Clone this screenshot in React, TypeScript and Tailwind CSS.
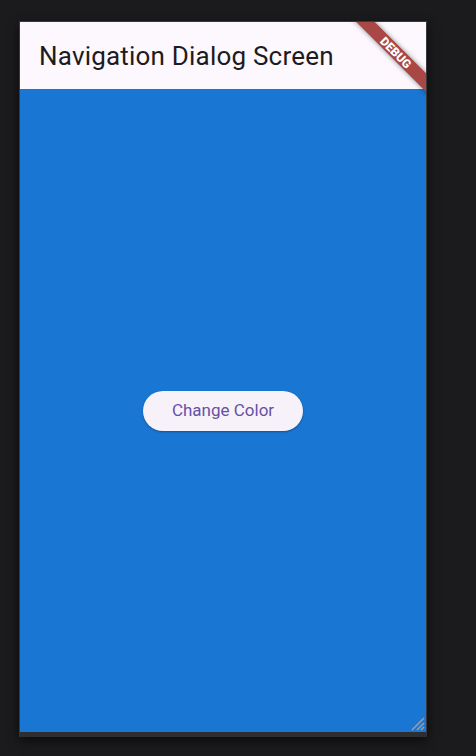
export default function App() {
	return (
		<div className="min-h-screen bg-[#1b1b1d] pl-[19px] pt-[21px]" style={{ fontFamily: "Roboto, 'Noto Sans', sans-serif" }}>
			<div className="relative w-[408px] border border-[#3a3a3c] border-b-[5px] border-b-[#2e2e30] shadow-[0_4px_10px_rgba(0,0,0,0.6)] overflow-hidden">
				<div className="flex h-[67px] items-center bg-[#fdf7fe] pl-[19px]">
					<span className="text-[26px] leading-none tracking-[0.2px] text-[#1d1b20]">Navigation Dialog Screen</span>
				</div>
				<div className="flex h-[643px] items-center justify-center bg-[#1976d2]">
					<button className="flex h-[40px] w-[160px] items-center justify-center rounded-full bg-[#f7f2fa] text-[17px] text-[#6750a4] shadow-[0_1px_2px_rgba(0,0,0,0.3)]">
						Change Color
					</button>
				</div>
				<div className="absolute left-[316px] top-[24px] flex h-[13px] w-[120px] rotate-45 items-center justify-center bg-[#a94646] shadow-[0_0_5px_rgba(0,0,0,0.45)]">
					<span className="text-[12px] font-black leading-none text-white">DEBUG</span>
				</div>
				<svg className="absolute bottom-[1px] right-[1px]" width="16" height="16" viewBox="0 0 16 16">
					<path d="M15 3 L3 15 M15 8 L8 15 M15 12 L12 15" stroke="#9e9e9e" strokeWidth="1.5" fill="none" />
				</svg>
			</div>
		</div>
	);
}
